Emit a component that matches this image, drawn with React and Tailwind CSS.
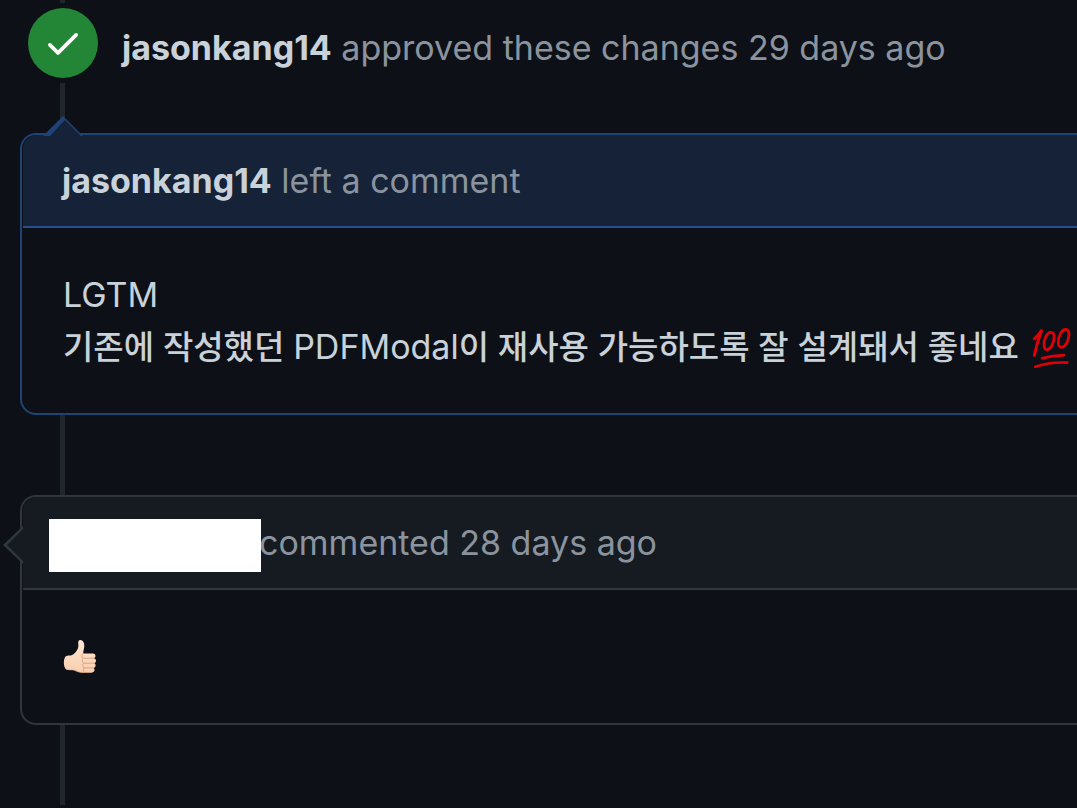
import React from "react";

function Connector({ className }) {
  return <div aria-hidden="true" className={`ml-15 w-[5px] bg-[#21262d] ${className}`} />;
}

function Hundred() {
  return (
    <svg role="img" aria-label="100" viewBox="0 0 40 42" className="mb-1 ml-[3px] inline-block h-11 w-[42px]" fill="none" stroke="#e00008" strokeLinecap="round" strokeLinejoin="round">
      <path d="M3.2 12.2C6 9.8 8 7.3 10 4.4C7.600 11 5.100 18.500 3.200 28" strokeWidth="2.800" />
      <path d="M20 6.200C15.300 4.600 11.700 13.500 12.400 19.200C13.100 24.700 17.500 23.200 20 18.200C22.200 13.500 23.200 7.200 20 6.200Z" strokeWidth="2.600" />
      <path d="M34 3.400C29.500 1.600 25.300 11 26 16.700C26.700 22.300 31.600 21 34.200 15.800C36.500 11 37.300 4.600 34 3.400Z" strokeWidth="2.600" />
      <path d="M10.500 30.800C17 29 24 28 31.500 27.800" strokeWidth="2.500" />
      <path d="M4 39C12.500 36 23.500 34.500 34.500 35" strokeWidth="2.500" />
    </svg>
  );
}

function ThumbsUp() {
  return (
    <svg role="img" aria-label="Thumbs up" viewBox="0 0 34 36" className="h-9 w-[34px]">
      <defs>
        <linearGradient id="skin" x1="0" y1="0" x2="0" y2="1">
          <stop offset="0" stopColor="#ffe6d0" />
          <stop offset="1" stopColor="#f8cfb0" />
        </linearGradient>
      </defs>
      <path d="M2.500 17.500C5 15.800 8 17.200 10.500 15.200C13.600 12.600 15.800 9.500 15.300 5.500C14.900 2.300 15.700 1 17.300 1C20 1 21.600 4 21.300 7.600C21.100 10.100 20.200 12 20.200 14.500H30C32.800 14.500 33.400 18.400 31 19.200C33.800 20 33.500 23.700 31.200 24.200C33.300 25 33 28.400 30.600 28.900C32.300 29.900 31.600 33.400 29 33.400H19C14.500 33.400 12.500 31 9 31C6.500 31 4.500 31.300 2.700 30C0.300 27.500 0.300 20 2.500 17.500Z" fill="url(#skin)" />
      <path d="M20 14.700C18.700 15.500 18.300 17.500 19.600 19.200M31 19.200H20.500C18.700 20.700 18.900 23 20.600 24.200H31.200M20.600 24.200C19.300 25.700 19.500 27.800 21 28.900H30.600M21 28.900C20 30.300 20 32 21.300 33.200" fill="none" stroke="#dca583" strokeWidth="1" strokeLinecap="round" />
      <path d="M3 30.200C7 31.300 10 30 13.500 32C15.500 33.100 17 33.400 20 33.400H29" fill="none" stroke="#e5af8b" strokeWidth="0.800" />
    </svg>
  );
}

function Card({ tone, arrow, header, children }) {
  const border = tone === "accent" ? "border-[#1f4277]" : "border-[#30363d]";
  const rule = tone === "accent" ? "border-[#264f8e]" : "border-[#30363d]";
  const fill = tone === "accent" ? "bg-[#152238]" : "bg-[#161b22]";
  return (
    <article className={`relative ml-5 rounded-l-2xl border-2 border-r-0 pl-px ${border}`}>
      {arrow}
      <header className={`flex h-[93px] items-center rounded-tl-[14px] border-b-2 pl-[39px] ${rule} ${fill}`}>
        {header}
      </header>
      <div className="pt-[41px] pb-10 pl-10 text-[#c9d1d9]">{children}</div>
    </article>
  );
}

export default function App() {
  return (
    <main className="min-h-screen overflow-hidden bg-[#0d1117] font-['Inter','Noto_Sans_CJK_KR',sans-serif] text-[34px] leading-[52px] whitespace-nowrap text-[#8b949e]">
      <Connector className="h-[3px]" />
      <div className="my-[5px] ml-7 flex h-[70px] items-center gap-6">
        <span className="flex size-[70px] shrink-0 items-center justify-center rounded-full bg-[#238636]">
          <svg viewBox="0 0 16 16" className="size-10" fill="#fff" aria-hidden="true">
            <path d="M13.780 4.220a.75.75 0 0 1 0 1.060l-7.250 7.250a.75.75 0 0 1-1.060 0L2.220 9.280a.751.751 0 0 1 .018-1.042.751.751 0 0 1 1.042-.018L6 10.940l6.720-6.720a.75.75 0 0 1 1.060 0Z" />
          </svg>
        </span>
        <p className="pt-2.5">
          <a href="#jasonkang14" className="font-bold text-[#c9d1d9]">jasonkang14</a> approved these changes 29 days ago
        </p>
      </div>
      <Connector className="h-[50px]" />

      <Card
        tone="accent"
        arrow={
          <svg aria-hidden="true" viewBox="0 0 40 20" className="absolute -top-[19px] left-[21px] h-5 w-10">
            <path d="M0 20L20 0L40 20Z" fill="#1f4277" />
            <path d="M7 20L22 4L38 20Z" fill="#152238" />
          </svg>
        }
        header={
          <p>
            <a href="#jasonkang14" className="font-bold text-[#c9d1d9]">jasonkang14</a> left a comment
          </p>
        }
      >
        <p>LGTM</p>
        <p className="h-[52px] text-[33px] font-medium">
          기존에 작성했던 <span className="text-[34px] font-normal">PDFModal</span>이 재사용 가능하도록 잘 설계돼서 좋네요{" "}
          <Hundred />
        </p>
      </Card>

      <Connector className="h-20" />

      <Card
        tone="neutral"
        arrow={
          <svg aria-hidden="true" viewBox="0 0 24 38" className="absolute top-[29px] -left-[19px] h-[38px] w-6">
            <path d="M20 0L0 19L20 38Z" fill="#30363d" />
            <path d="M24 0L20 3L4 19L20 35L24 38Z" fill="#161b22" />
          </svg>
        }
        header={
          <div className="-ml-[13px] flex items-center">
            <span className="relative mt-1.5 -mr-0.5 h-[53px] w-[212px] bg-white" />
            <p>commented 28 days ago</p>
          </div>
        }
      >
        <div className="flex h-[52px] items-center">
          <ThumbsUp />
        </div>
      </Card>

      <Connector className="h-20" />
    </main>
  );
}
